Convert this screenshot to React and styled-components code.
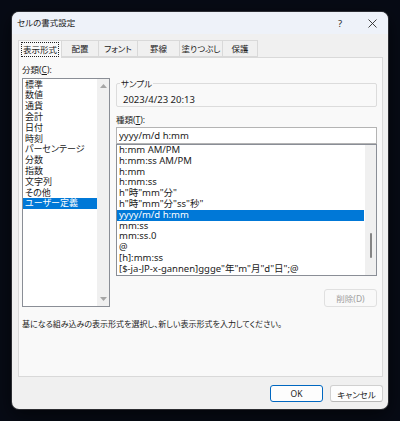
import styled, { createGlobalStyle } from 'styled-components'

const categories = [
  '標準',
  '数値',
  '通貨',
  '会計',
  '日付',
  '時刻',
  'パーセンテージ',
  '分数',
  '指数',
  '文字列',
  'その他',
  'ユーザー定義',
]

const formats = [
  'h:mm AM/PM',
  'h:mm:ss AM/PM',
  'h:mm',
  'h:mm:ss',
  'h"時"mm"分"',
  'h"時"mm"分"ss"秒"',
  'yyyy/m/d h:mm',
  'mm:ss',
  'mm:ss.0',
  '@',
  '[h]:mm:ss',
  '[$-ja-JP-x-gannen]ggge"年"m"月"d"日";@',
]

const tabs = [
  { label: '表示形式', width: 44, active: true },
  { label: '配置', width: 38 },
  { label: 'フォント', width: 40 },
  { label: '罫線', width: 43 },
  { label: '塗りつぶし', width: 44 },
  { label: '保護', width: 36 },
]

const UpArrow = () => (
  <svg width='7' height='4' viewBox='0 0 7 4'>
    <polygon points='0,4 3.5,0 7,4' fill='#a6a6a6' />
  </svg>
)

const DownArrow = () => (
  <svg width='7' height='4' viewBox='0 0 7 4'>
    <polygon points='0,0 3.5,4 7,0' fill='#a6a6a6' />
  </svg>
)

const CloseIcon = () => (
  <svg width='9' height='9' viewBox='0 0 9 9'>
    <path d='M0.5 0.5 L8.5 8.5 M8.5 0.5 L0.5 8.5' stroke='#2b2b2b' strokeWidth='0.9' />
  </svg>
)

const App = () => {
  return (
    <Screen>
      <GlobalStyle />
      <Dialog>
        <TitleBar>
          <Title>セルの書式設定</Title>
          <CaptionButton>?</CaptionButton>
          <CaptionButton>
            <CloseIcon />
          </CaptionButton>
        </TitleBar>

        <Body>
          {/* tab strip */}
          <TabStrip>
            {tabs.map(t => (
              <Tab key={t.label} $width={t.width} $active={t.active}>
                {t.active ? <FocusText>{t.label}</FocusText> : t.label}
              </Tab>
            ))}
          </TabStrip>

          <Panel>
            <Columns>
              <LeftCol>
                <Label>
                  分類(<u>C</u>):
                </Label>
                <CategoryList>
                  <Items>
                    {categories.map(c => (
                      <Item key={c} $selected={c === 'ユーザー定義'}>
                        {c}
                      </Item>
                    ))}
                  </Items>
                  <ArrowTrack>
                    <ArrowBox>
                      <UpArrow />
                    </ArrowBox>
                    <ArrowBox>
                      <DownArrow />
                    </ArrowBox>
                  </ArrowTrack>
                </CategoryList>
              </LeftCol>

              <RightCol>
                <SampleBox>
                  <SampleLegend>サンプル</SampleLegend>
                  <SampleValue>2023/4/23 20:13</SampleValue>
                </SampleBox>
                <TypeLabel>
                  種類(<u>T</u>):
                </TypeLabel>
                <TypeInput value='yyyy/m/d h:mm' readOnly />
                <FormatList>
                  <FormatItems>
                    {formats.map(f => (
                      <FormatItem key={f} $selected={f === 'yyyy/m/d h:mm'}>
                        {f}
                      </FormatItem>
                    ))}
                  </FormatItems>
                  <ThinTrack>
                    <Thumb $offset={88} $size={25} />
                  </ThinTrack>
                </FormatList>
                <DeleteButton disabled>削除(D)</DeleteButton>
              </RightCol>
            </Columns>

            <Hint>
              基になる組み込みの表示形式を選択し、新しい表示形式を入力してください。
            </Hint>
          </Panel>

          <ButtonRow>
            <Button $default>OK</Button>
            <Button>キャンセル</Button>
          </ButtonRow>
        </Body>
      </Dialog>
    </Screen>
  )
}

export default App

const GlobalStyle = createGlobalStyle`
  html, body {
    margin: 0;
    padding: 0;
    background: #070b15;
  }
  body {
    width: 400px;
    height: 421px;
    overflow: hidden;
    font-family: "Noto Sans", "Noto Sans CJK JP", sans-serif;
    font-feature-settings: "palt";
    color: #1b1b1b;
    -webkit-font-smoothing: antialiased;
  }
  * {
    box-sizing: border-box;
  }
`
const Screen = styled.div`
  width: 400px;
  height: 421px;
  padding: 12px 0 0 12px;
`
const Dialog = styled.div`
  width: 376px;
  height: 397px;
  display: flex;
  flex-direction: column;
  background: #f0f0f0;
  border-radius: 7px;
  overflow: hidden;
  box-shadow: 0 0 0 1px rgba(120, 120, 120, 0.35), 0 6px 20px rgba(0, 0, 0, 0.6);
`
const TitleBar = styled.div`
  height: 22px;
  flex: none;
  display: flex;
  align-items: center;
  background: #eef2f9;
`
const Title = styled.div`
  flex: 1;
  padding-left: 5px;
  font-size: 8.5px;
  line-height: 12px;
`
const CaptionButton = styled.div`
  width: 32px;
  height: 22px;
  display: flex;
  align-items: center;
  justify-content: center;
  font-size: 9.5px;
  color: #2b2b2b;
`
const Body = styled.div`
  flex: 1;
  display: flex;
  flex-direction: column;
  padding: 6px 5px 7px 6px;
`
const TabStrip = styled.div`
  display: flex;
  height: 17px;
  flex: none;
  position: relative;
  z-index: 1;
`
const Tab = styled.div`
  width: ${({ $width }) => $width}px;
  height: ${({ $active }) => ($active ? '18px' : '17px')};
  margin-left: -1px;
  display: flex;
  align-items: center;
  justify-content: center;
  font-size: 8.5px;
  line-height: 11px;
  border: 1px solid #d9d9d9;
  border-bottom: ${({ $active }) => ($active ? 'none' : '1px solid #d9d9d9')};
  background: ${({ $active }) => ($active ? '#f9f9f9' : '#f0f0f0')};
  &:first-child {
    margin-left: 0;
  }
`
const FocusText = styled.span`
  outline: 1px dotted #222;
  padding: 1px 1px;
  line-height: 11px;
`
const Panel = styled.div`
  flex: 1;
  display: flex;
  flex-direction: column;
  background: #f9f9f9;
  border: 1px solid #d9d9d9;
  padding: 6px 5px 0 3px;
`
const Columns = styled.div`
  display: grid;
  grid-template-columns: 88px 261px;
  column-gap: 6px;
`
const LeftCol = styled.div`
  display: flex;
  flex-direction: column;
`
const Label = styled.div`
  font-size: 8.5px;
  line-height: 12px;
  height: 14px;
  u {
    text-underline-offset: 1px;
  }
`
const CategoryList = styled.div`
  height: 229px;
  display: flex;
  background: #fff;
  border: 1px solid #8a8e96;
`
const Items = styled.div`
  flex: 1;
  padding-top: 0.6px;
  overflow: hidden;
`
const Item = styled.div`
  height: 10.8px;
  line-height: 10.8px;
  padding-left: 2px;
  font-size: 9px;
  white-space: nowrap;
  background: ${({ $selected }) => ($selected ? '#0078d7' : 'transparent')};
  color: ${({ $selected }) => ($selected ? '#fff' : '#1b1b1b')};
`
const ArrowTrack = styled.div`
  width: 12px;
  display: flex;
  flex-direction: column;
  justify-content: space-between;
  background: #f0f0f0;
`
const ArrowBox = styled.div`
  height: 14px;
  display: flex;
  align-items: center;
  justify-content: center;
`
const RightCol = styled.div`
  display: flex;
  flex-direction: column;
`
const SampleBox = styled.fieldset`
  margin: 14px 0 0;
  padding: 0 3px;
  border: 1px solid #dcdcdc;
  border-radius: 2px;
  min-inline-size: auto;
`
const SampleLegend = styled.legend`
  padding: 0 1px;
  margin-left: 0;
  font-size: 8.5px;
  line-height: 11px;
`
const SampleValue = styled.div`
  padding: 5px 0 0 3px;
  font-size: 9.5px;
  line-height: 12px;
  height: 17px;
`
const TypeLabel = styled(Label)`
  margin-top: 7px;
  height: 12px;
`
const TypeInput = styled.input`
  margin: 1px 0 0;
  height: 17px;
  width: 100%;
  padding: 0 2px;
  border: 1px solid #b4b4b4;
  background: #fff;
  font-family: "Noto Sans", "Noto Sans CJK JP", sans-serif;
  font-size: 9.5px;
  color: #1b1b1b;
  outline: none;
`
const FormatList = styled.div`
  height: 132px;
  display: flex;
  background: #fff;
  border: 1px solid #8a8e96;
`
const FormatItems = styled.div`
  flex: 1;
  overflow: hidden;
`
const FormatItem = styled(Item)`
  font-size: 9.5px;
  padding-left: 2px;
  margin-right: 1px;
`
const ThinTrack = styled.div`
  width: 11px;
  background: #f0f0f0;
  display: flex;
  justify-content: center;
`
const Thumb = styled.div`
  width: 2px;
  height: ${({ $size }) => $size}px;
  margin-top: ${({ $offset }) => $offset}px;
  border-radius: 1px;
  background: #858585;
`
const DeleteButton = styled.button`
  align-self: flex-end;
  margin-top: 13px;
  width: 53px;
  height: 18px;
  padding: 0;
  border: 1px solid #e0e0e0;
  border-radius: 3px;
  background: #f9f9f9;
  font-family: "Noto Sans", "Noto Sans CJK JP", sans-serif;
  font-feature-settings: "palt";
  font-size: 8.5px;
  color: #a0a0a0;
`
const Hint = styled.div`
  margin-top: 11px;
  font-size: 8px;
  line-height: 12px;
  white-space: nowrap;
`
const ButtonRow = styled.div`
  display: flex;
  justify-content: flex-end;
  gap: 7px;
  margin-top: 8px;
  height: 17px;
  flex: none;
`
const Button = styled.button`
  width: 53px;
  height: 17px;
  padding: 0;
  border-radius: 3px;
  border: 1px solid ${({ $default }) => ($default ? '#0067c0' : '#d0d0d0')};
  border-bottom-color: ${({ $default }) => ($default ? '#0067c0' : '#b8b8b8')};
  background: #fdfdfd;
  font-family: "Noto Sans", "Noto Sans CJK JP", sans-serif;
  font-feature-settings: "palt";
  font-size: 8.5px;
  color: #1b1b1b;
`
